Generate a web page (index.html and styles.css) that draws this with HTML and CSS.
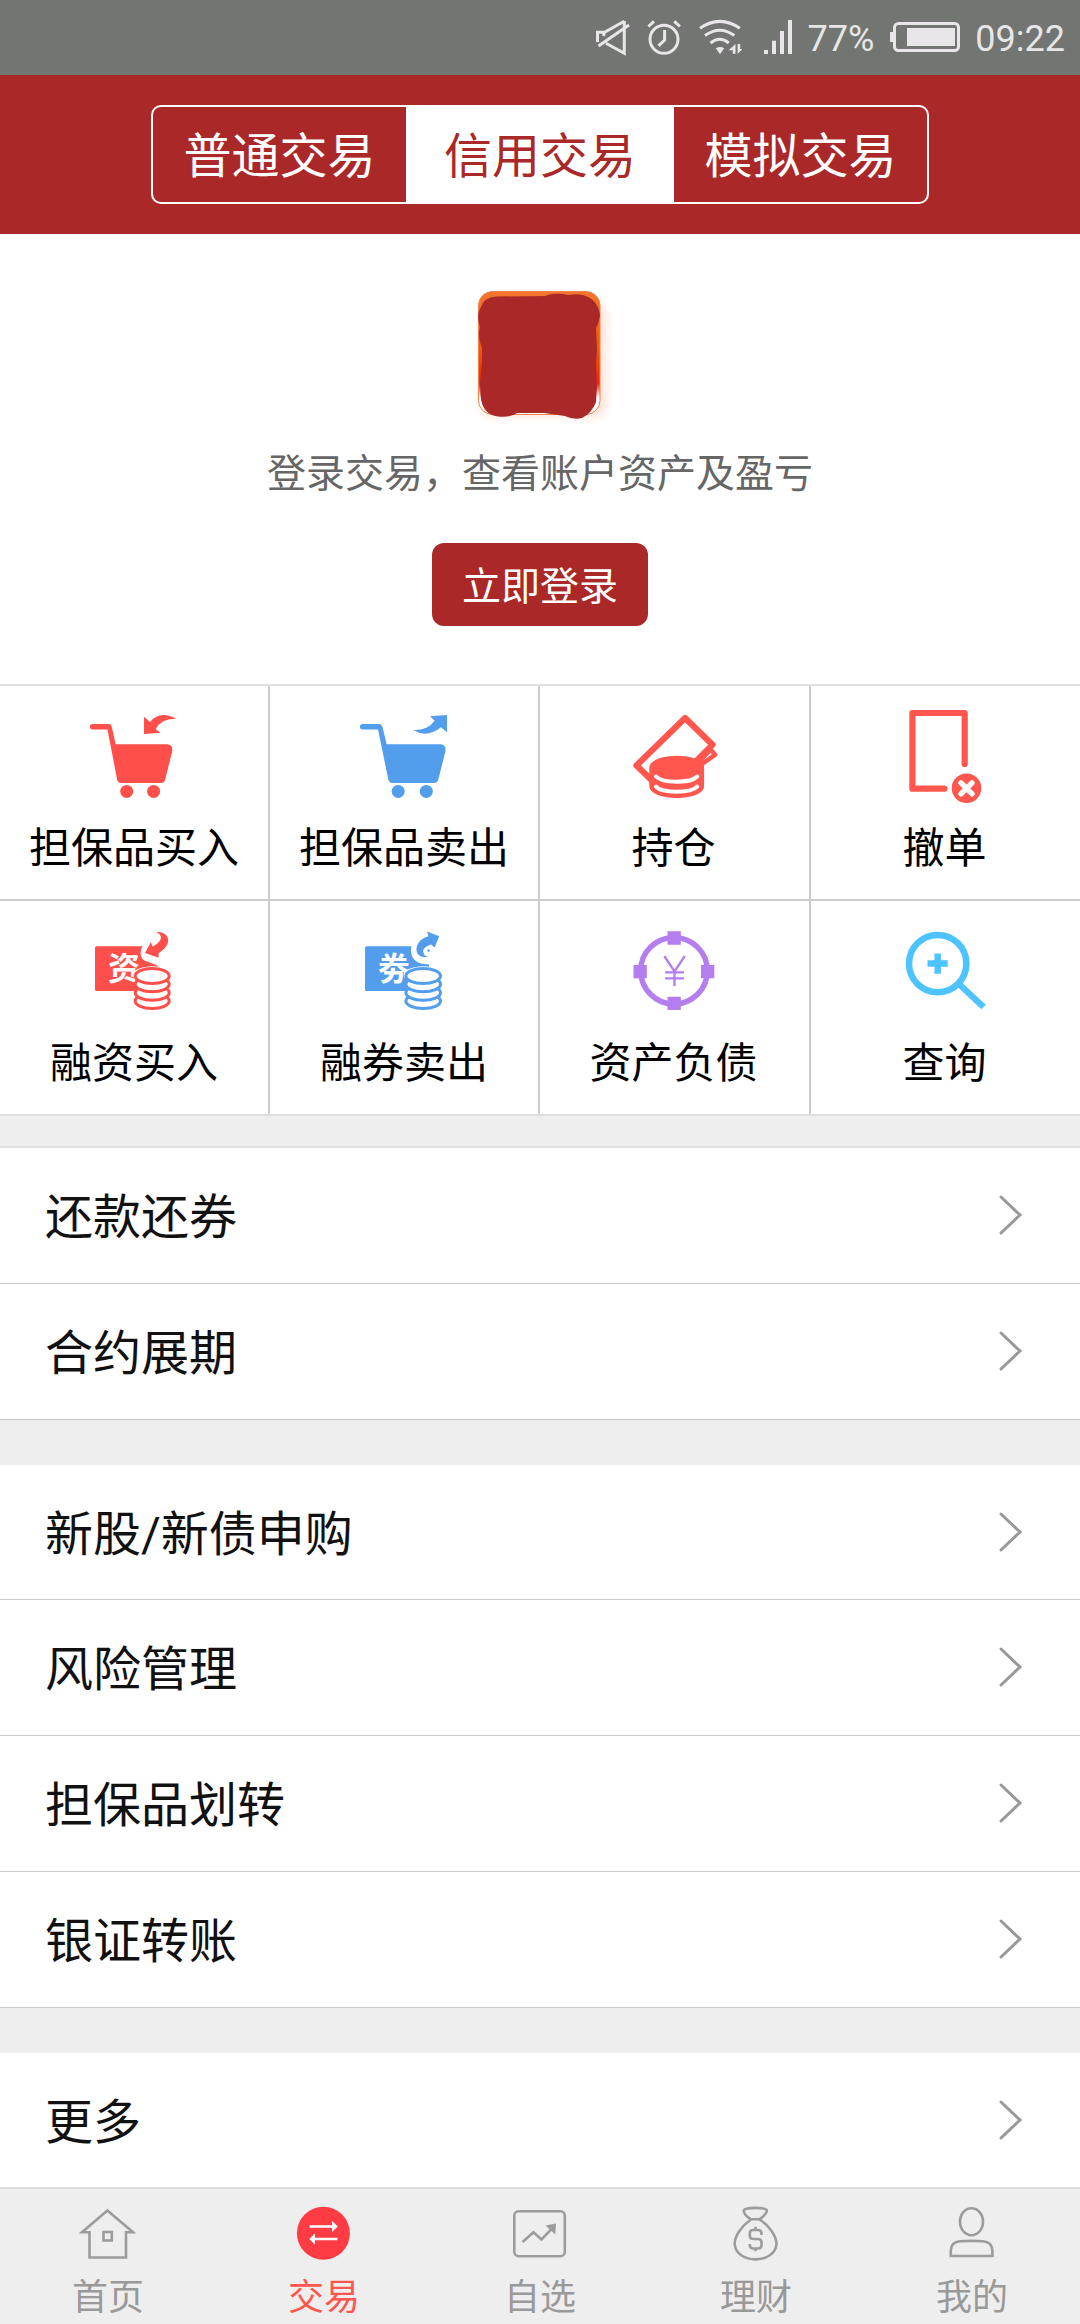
FILE: index.html
```html
<!DOCTYPE html>
<html lang="zh-CN">
<head>
<meta charset="utf-8">
<title>信用交易</title>
<link rel="stylesheet" href="styles.css">
</head>
<body>
<div class="statusbar">
  <svg class="st-mute" width="36" height="40" viewBox="595 17 36 40"><path d="M624.3 21.3 604.5 32.2H597.5V42M604.5 32.2 603.5 36M624.3 21V53.2L606 43.3M598.5 46 629 25"/></svg>
  <svg class="st-alarm" width="36" height="40" viewBox="646 17 36 40"><circle cx="664" cy="39.3" r="14"/><path d="M664.6 30V40L658.5 45.8M648.4 26.5 654 21.3M680 26.5 674.2 21.3"/></svg>
  <svg class="st-wifi" width="44" height="40" viewBox="699 17 44 40"><path d="M700 28.3Q719.8 14.5 739.8 28.3M705 35.5Q719.8 25 734.3 35.5M710.5 43Q719.8 35.5 728.8 43"/><path class="solid" d="M715.8 48.2Q720 45.8 724.2 48.2L720 54.2ZM735.5 53.8V44L728.6 50.2H732.8V53.8ZM737.6 44V54L742.4 49H740.2V44Z"/></svg>
  <svg class="st-signal" width="30" height="40" viewBox="763 17 30 40"><path class="solid" d="M764 50h4v4h-4zM772 40.7h4V54h-4zM780 31h4v23h-4zM788 20h4v34h-4z"/></svg>
  <span class="st-percent">77%</span>
  <svg class="st-battery" width="72" height="40" viewBox="889 17 72 40"><rect x="894.5" y="23.5" width="64" height="27" rx="4"/><path class="solid" d="M890 32h4v10h-4zM907 28h48v18h-48z"/></svg>
  <span class="st-time">09:22</span>
</div>

<header class="header">
  <div class="tabs">
    <div class="tab">普通交易</div>
    <div class="tab tab-on">信用交易</div>
    <div class="tab">模拟交易</div>
  </div>
</header>

<section class="login">
  <svg class="logo" width="144" height="144" viewBox="468 281 144 144">
    <defs>
      <linearGradient id="edge" x1="0" y1="0" x2="0" y2="1"><stop offset="0" stop-color="#f4762f"/><stop offset=".45" stop-color="#f25a05"/><stop offset=".75" stop-color="#f02806"/><stop offset=".86" stop-color="#fff"/></linearGradient>
      <filter id="soft"><feGaussianBlur stdDeviation="4"/></filter>
    </defs>
    <rect x="480" y="302" width="126" height="115" rx="12" fill="#fde3d8" filter="url(#soft)"/>
    <rect x="478.5" y="291.5" width="121.5" height="123" rx="14" fill="url(#edge)" stroke="#f0824a" stroke-width="1"/>
    <path fill="#ab2829" d="M496 296.500 545 296C552 293 562 293.500 568 295C590 291 599 304 600 315Q599 323 596 328L597 350 596 365 597 385 596 402Q592 413 582 418Q573 420 565 416L544 413H517Q510 418 498 416.500Q482 415 480.500 395L480 382 482 362V348Q477 337 480 327Q476 315 480.500 308Q484 297 496 296.500Z"/>
  </svg>
  <p class="hint">登录交易，查看账户资产及盈亏</p>
  <div class="login-btn">立即登录</div>
</section>

<section class="grid">
  <div class="cell">
    <svg class="red" width="100" height="100" viewBox="84 706 100 100"><path d="M107.500 729.400 117 779Q117.800 783 121 783H161Q164.300 783 165.200 779.500L172.300 751Q173 744.300 167 744.200H115.700L111.800 727Q111 724 109 724H92.600a2.700 2.700 0 0 0 0 5.400ZM144 716.700 150 722Q160 710 176.300 718.700Q162 718 155.600 729L160.500 732.700 144 734Z"/><circle cx="126.700" cy="791.400" r="6.500"/><circle cx="153.600" cy="791.400" r="6.500"/></svg>
    <span>担保品买入</span>
  </div>
  <div class="cell">
    <svg class="blue" width="100" height="100" viewBox="354 706 100 100"><path d="M378 729.400 388.200 779Q389 783 392.300 783H433.800Q437.300 783 438.300 779.500L445.500 751Q446.300 744.300 440 744.200H386.700L382.500 727Q381.700 724 379.500 724H362.600a2.700 2.700 0 0 0 0 5.400ZM413.200 730Q427 738.500 441 727.300L447 732.300V715L430 716.300 434.600 720.700Q427.500 730.500 413.200 730Z"/><circle cx="398.200" cy="791.400" r="6.500"/><circle cx="426.300" cy="791.400" r="6.500"/></svg>
    <span>担保品卖出</span>
  </div>
  <div class="cell cell-right">
    <svg class="coral" width="100" height="100" viewBox="624.500 706 100 100"><path class="line" d="M652 781 636 765.500 684.600 718 712 744.700 694 763"/><path class="line" d="M709 748.500 714.700 754.700 698 766.500M709 751 698 762"/><path d="M648.800 768C649 751.500 703.600 751.500 703.600 768V786C703.600 802 648.800 802 648.800 786Z"/><path class="cut" d="M655.500 776.500C662 783.500 690 783.500 696.700 776.500M655.500 786.700C662 793.500 690 793.500 696.700 786.700"/></svg>
    <span>持仓</span>
  </div>
  <div class="cell cell-right">
    <svg class="coral" width="100" height="100" viewBox="895.500 706 100 100"><path class="line" d="M964.200 764V713H911.900V788.700H943.800"/><circle cx="966" cy="788.300" r="14.800"/><path class="cut" d="M960.500 782.800 971.500 793.800M971.500 782.800 960.500 793.800"/></svg>
    <span>撤单</span>
  </div>
  <div class="cell">
    <svg class="red" width="100" height="100" viewBox="84 921 100 100"><path d="M96.500 946.300H142.500C140 951 139.500 958 144.500 960.500L157.700 965.500V991H96.500Q95 991 95 989.500V947.800Q95 946.300 96.500 946.300Z"/><path d="M156 932C165 931 169.500 937 168 942.500Q166.500 948 158.800 953L158.500 957.700 145 953 150.800 942.300 152.700 946.500C161 942.500 164.500 935.500 156 932Z"/><text x="108" y="980" class="glyph">资</text><ellipse cx="152.200" cy="975" rx="19.500" ry="8.800" fill="#fff"/><g class="coins"><ellipse cx="152.200" cy="1001" rx="17" ry="7.500"/><ellipse cx="152.200" cy="992.700" rx="17" ry="7.500"/><ellipse cx="152.200" cy="984.300" rx="17" ry="7.500"/><ellipse cx="152.200" cy="976" rx="17" ry="7.500"/></g></svg>
    <span>融资买入</span>
  </div>
  <div class="cell">
    <svg class="blue" width="100" height="100" viewBox="354 921 100 100"><path d="M366.500 946.300H411.500C409.500 954 413 961.500 421 963.500L429 964.500V991H366.500Q365 991 365 989.500V947.800Q365 946.300 366.500 946.300Z"/><path d="M427 931.500 439.200 936.200 434.600 947.500 431.200 944.500Q422.500 947 423.300 952Q424 957 429 956.500C418 959.500 415 951 417 946Q419.500 938.500 428.500 936.200Z"/><circle cx="428.500" cy="950.500" r="1.200"/><text x="378" y="980" class="glyph">劵</text><ellipse cx="423.200" cy="975" rx="19.500" ry="8.800" fill="#fff"/><g class="coins"><ellipse cx="423.200" cy="1001" rx="17.300" ry="7.500"/><ellipse cx="423.200" cy="992.700" rx="17.300" ry="7.500"/><ellipse cx="423.200" cy="984.300" rx="17.300" ry="7.500"/><ellipse cx="423.200" cy="976" rx="17.300" ry="7.500"/></g></svg>
    <span>融券卖出</span>
  </div>
  <div class="cell cell-right">
    <svg class="purple" width="100" height="100" viewBox="624.500 921 100 100"><circle class="line" cx="673.500" cy="970.700" r="33.300"/><path d="M667 931.300h13.300v13.400H667zM667 996.700h13.300v13.300H667zM633 965h13.300v13.300H633zM700.500 965h13.300v13.300h-13.300z"/><path class="yen" d="M663.800 956 674 971.500 684.300 956M674 971V986M664.600 972.300H683.400M664.600 978.400H683.400"/></svg>
    <span>资产负债</span>
  </div>
  <div class="cell cell-right">
    <svg class="sky" width="100" height="100" viewBox="895.500 921 100 100"><circle class="line" cx="937.200" cy="963.600" r="28.700"/><path class="flat" d="M927 963.600H947.200M937.200 953.400V973.700"/><path class="flat" d="M959 984.500 983 1007"/></svg>
    <span>查询</span>
  </div>
</section>

<div class="list list-first">
  <div class="row"><span>还款还券</span><svg class="chev" width="24" height="42" viewBox="0 0 24 42"><path d="M2 3 21 21 2 39"/></svg></div>
  <div class="row"><span>合约展期</span><svg class="chev" width="24" height="42" viewBox="0 0 24 42"><path d="M2 3 21 21 2 39"/></svg></div>
</div>
<div class="list list-main">
  <div class="row"><span>新股<span class="latin">/</span>新债申购</span><svg class="chev" width="24" height="42" viewBox="0 0 24 42"><path d="M2 3 21 21 2 39"/></svg></div>
  <div class="row"><span>风险管理</span><svg class="chev" width="24" height="42" viewBox="0 0 24 42"><path d="M2 3 21 21 2 39"/></svg></div>
  <div class="row"><span>担保品划转</span><svg class="chev" width="24" height="42" viewBox="0 0 24 42"><path d="M2 3 21 21 2 39"/></svg></div>
  <div class="row"><span>银证转账</span><svg class="chev" width="24" height="42" viewBox="0 0 24 42"><path d="M2 3 21 21 2 39"/></svg></div>
</div>
<div class="list list-more">
  <div class="row"><span>更多</span><svg class="chev" width="24" height="42" viewBox="0 0 24 42"><path d="M2 3 21 21 2 39"/></svg></div>
</div>

<nav class="nav">
  <div class="nav-item"><svg width="64" height="60" viewBox="76 2203 64 60"><path d="M107.400 2210.500 82 2232.300H89.500V2257.500H126V2232.300H133Z"/><rect x="103.500" y="2232" width="8.300" height="8.500"/></svg><span>首页</span></div>
  <div class="nav-item nav-on"><svg width="64" height="60" viewBox="292 2203 64 60"><circle cx="323.400" cy="2233.300" r="26.500"/><path class="bar" d="M309.600 2226.500H334M313 2239H337.500"/><path class="head" d="M332 2221 337.800 2226.500 332 2232ZM315 2233.500 309.200 2239 315 2244.500Z"/></svg><span>交易</span></div>
  <div class="nav-item"><svg width="64" height="60" viewBox="508 2203 64 60"><rect x="514.300" y="2211.200" width="50.500" height="45" rx="4.500"/><path d="M522.600 2242 533.400 2232.200 541.500 2239.500 552.500 2228"/><path class="fill" d="M545.500 2225.500 556 2223.500 555.200 2234.500Z"/></svg><span>自选</span></div>
  <div class="nav-item"><svg width="64" height="60" viewBox="724 2203 64 60"><path d="M751 2219.300C746 2216 743.500 2213 743.800 2210.500C744.500 2207 766 2207 766.800 2210.500C767 2213 764 2216 759.500 2219.300ZM751 2219.500C742 2225.500 734.500 2236 734.700 2244C736 2264.500 775 2264.500 776.500 2244C776.500 2236 769 2225.500 759.500 2219.500"/><path d="M761.500 2235V2233.500Q761.500 2230 758 2230H753.200Q749.800 2230 749.800 2233.500V2235.500Q749.800 2239 753.200 2239H758Q761.500 2239 761.500 2242.500V2245Q761.500 2248.500 758 2248.500H753.200Q749.800 2248.500 749.800 2245V2244M755.500 2226.800V2230M755.500 2248.500V2251.300"/></svg><span>理财</span></div>
  <div class="nav-item"><svg width="64" height="60" viewBox="940 2203 64 60"><ellipse cx="971.500" cy="2221.700" rx="11.500" ry="13.500"/><path d="M950.800 2256V2250.500Q951 2242 960 2241.300Q971 2240.500 983 2241.300Q992 2242 992.400 2250.500V2256Z"/></svg><span>我的</span></div>
</nav>
</body>
</html>
```
FILE: styles.css
```css
* { box-sizing: border-box; }

body {
  margin: 0;
  width: 1080px;
  height: 2324px;
  overflow: hidden;
  background: #eee;
  color: #000;
  font-family: "Noto Sans CJK SC", sans-serif;
}

svg { display: block; flex: none; }

/* system status bar */
.statusbar {
  display: flex;
  align-items: center;
  justify-content: flex-end;
  height: 75px;
  padding: 0 15px 1px 0;
  background: #727572;
  color: #e6e6e6;
  font: 36px/70px Roboto, sans-serif;
}
.statusbar svg {
  fill: none;
  stroke: #e8e6e8;
  stroke-width: 3;
}
.statusbar .solid { fill: #e8e6e8; stroke: none; }
.st-alarm { margin-left: 15px; }
.st-wifi { margin-left: 17px; }
.st-signal { margin-left: 20px; margin-right: 15px; }
.st-percent, .st-time { padding-top: 4px; }
.st-battery { margin: 0 14px 0 15px; }

/* header with the account switch */
.header {
  display: flex;
  justify-content: center;
  height: 159px;
  padding-top: 30px;
  background: #ab2829;
}
.tabs {
  display: flex;
  width: 778px;
  height: 99px;
  border: 2px solid #fff;
  border-radius: 10px;
  overflow: hidden;
}
.tab {
  flex: 1 1 253px;
  color: #fff;
  font-size: 48px;
  line-height: 91px;
  text-align: center;
}
.tab-on {
  flex: 0 0 268px;
  background: #fff;
  color: #ab2829;
}

/* login prompt */
.login {
  display: flex;
  flex-direction: column;
  align-items: center;
  height: 450px;
  padding-top: 47px;
  background: #fff;
}
.hint {
  margin: 16px 0 0;
  color: #666;
  font-size: 39px;
  line-height: 58px;
}
.login-btn {
  width: 216px;
  height: 83px;
  margin-top: 44px;
  border-radius: 12px;
  background: #ab2829;
  color: #fff;
  font-size: 39px;
  line-height: 80px;
  text-align: center;
}

/* shortcut grid */
.grid {
  display: grid;
  grid-template-columns: 268px 268px 269px 269px;
  grid-template-rows: 213px 213px;
  gap: 2px;
  border-top: 2px solid #dfdfdf;
  border-bottom: 2px solid #dfdfdf;
  background: #ccc;
}
.cell {
  display: flex;
  flex-direction: column;
  align-items: center;
  padding-top: 20px;
  background: #fff;
  font-size: 42px;
  line-height: 60px;
}
.cell span { margin-top: 9px; }
.cell-right span { margin-right: 2px; }
.red { fill: #ff4f4b; stroke: #ff4f4b; }
.blue { fill: #539eec; stroke: #539eec; }
.coral { fill: #ff564d; stroke: #ff564d; }
.purple { fill: #b47eee; stroke: #b47eee; }
.sky { fill: #4dc3ff; stroke: #4dc3ff; }
.cell path, .cell circle, .cell ellipse { stroke-width: 0; }
.cell .line { fill: none; stroke-linejoin: round; stroke-linecap: round; }
.cell .cut { fill: none; stroke: #fff; stroke-linecap: round; }
.cell .flat { fill: none; }
.coral .line { stroke-width: 6.2px; }
.coral .line + .line { stroke-width: 4.5px; }
.coral .cut { stroke-width: 4px; }
.coral circle + .cut { stroke-width: 5.4px; }
.purple .line { stroke-width: 5.5px; }
.sky .line, .sky .flat { stroke-width: 6.5px; }
.purple .yen { fill: none; stroke-width: 2.3px; }
.cell .coins ellipse { fill: #fff; stroke-width: 3px; }
.glyph { fill: #fff; stroke: none; font-size: 32px; font-weight: 700; }

/* menu lists */
.list { background: #fff; }
.list-first { margin-top: 30px; border-top: 2px solid #dfdfdf; }
.list-main, .list-more { margin-top: 45px; }
.row {
  display: flex;
  align-items: center;
  justify-content: space-between;
  height: 136px;
  padding: 0 57px 2px 45px;
  border-bottom: 1px solid #ccc;
  color: #111;
  font-size: 48px;
  line-height: 72px;
}
.row > span { padding-bottom: 4px; }
.latin { font-family: Roboto, sans-serif; line-height: 1; }
.list-main .row:first-child { height: 135px; padding-bottom: 0; }
.list-more .row { height: 134px; padding-bottom: 1px; border-bottom: 0; }
.chev { fill: none; stroke: #999; stroke-width: 3; stroke-linecap: round; }

/* bottom navigation */
.nav {
  display: flex;
  height: 137px;
  border-top: 2px solid #dcdcdc;
  background: #eee;
  color: #999;
}
.nav-item {
  display: flex;
  flex: 1;
  flex-direction: column;
  align-items: center;
  padding-top: 14px;
  font-size: 36px;
  line-height: 54px;
}
.nav-item span { margin-top: 4px; }
.nav svg { fill: none; stroke: #9c9c9c; stroke-width: 2.6; }
.nav .fill { fill: #9c9c9c; stroke: none; }
.nav-on { color: #ff564d; }
.nav .nav-on circle { fill: #ff3b43; stroke: none; }
.nav .nav-on .bar { stroke: #fff; stroke-width: 2.6; }
.nav .nav-on .head { fill: #fff; stroke: none; }
```
